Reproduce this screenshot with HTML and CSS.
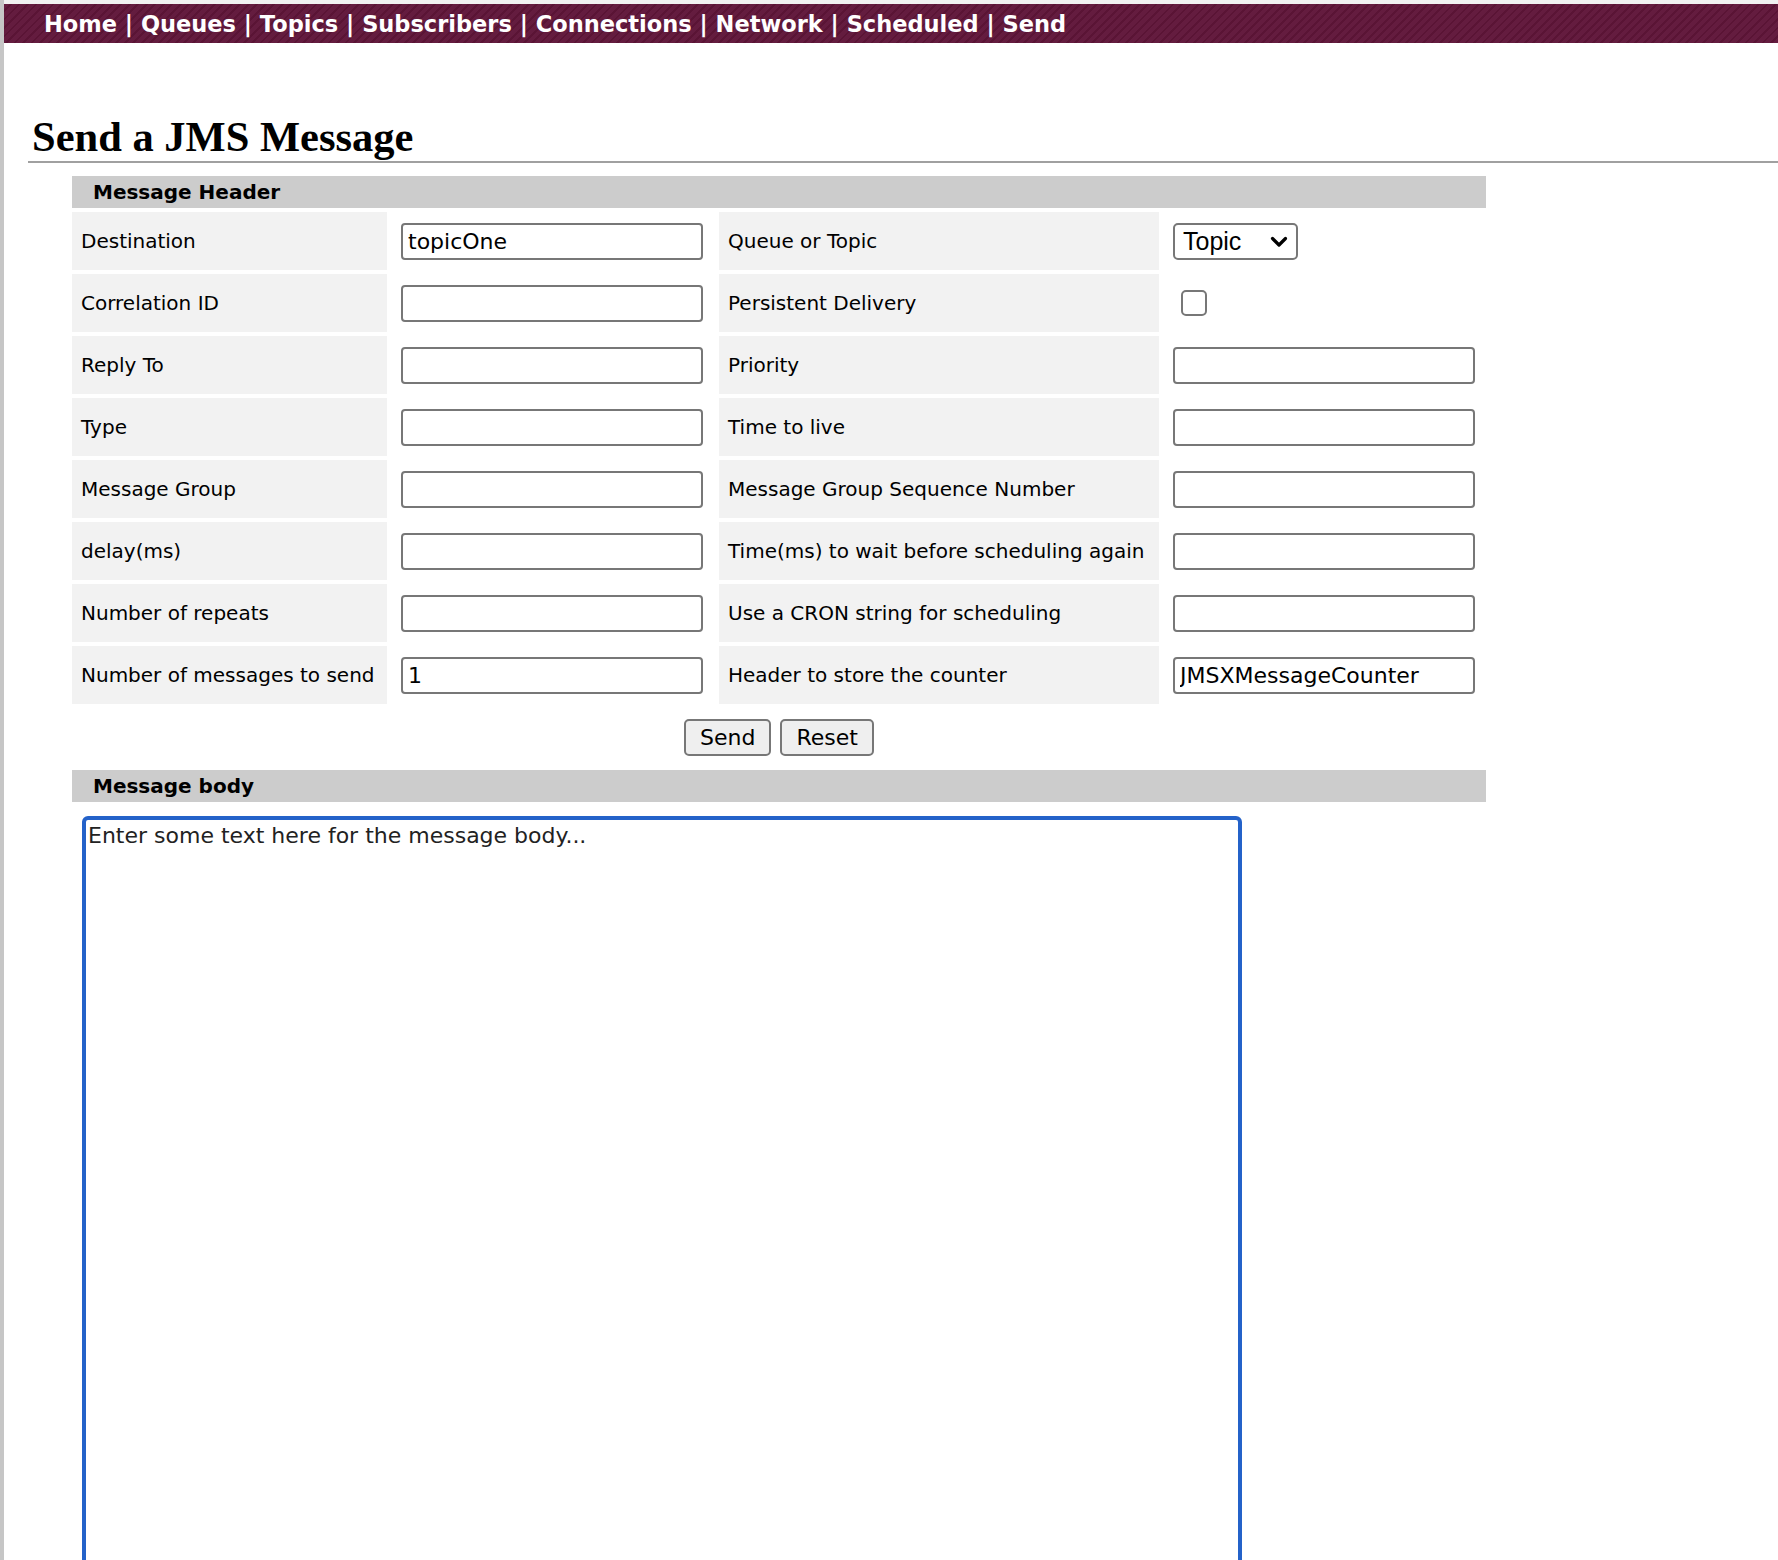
FILE: index.html
```html
<!DOCTYPE html>
<html>
<head>
<meta charset="utf-8">
<title>Send a JMS Message</title>
<link rel="stylesheet" href="styles.css">
</head>
<body>
<div class="frame">
  <div class="topstrip"></div>
  <nav class="nav">
    <a href="#">Home</a> | <a href="#">Queues</a> | <a href="#">Topics</a> | <a href="#">Subscribers</a> | <a href="#">Connections</a> | <a href="#">Network</a> | <a href="#">Scheduled</a> | <a href="#">Send</a>
  </nav>
  <main class="content">
    <h1 class="title">Send a JMS Message</h1>
    <form class="form">
      <div class="bar">Message Header</div>
      <div class="grid">
        <div class="label">Destination</div>
        <div class="field"><input class="text" type="text" value="topicOne"></div>
        <div class="label">Queue or Topic</div>
        <div class="field">
          <span class="selectwrap">
            <select class="select"><option>Queue</option><option selected>Topic</option></select>
            <svg class="chev" width="18" height="12" viewBox="0 0 18 12"><path d="M2.5 2.5 L9 9 L15.5 2.5" fill="none" stroke="#000" stroke-width="3.2" stroke-linecap="round" stroke-linejoin="round"/></svg>
          </span>
        </div>

        <div class="label">Correlation ID</div>
        <div class="field"><input class="text" type="text"></div>
        <div class="label">Persistent Delivery</div>
        <div class="field"><input class="check" type="checkbox"></div>

        <div class="label">Reply To</div>
        <div class="field"><input class="text" type="text"></div>
        <div class="label">Priority</div>
        <div class="field"><input class="text" type="text"></div>

        <div class="label">Type</div>
        <div class="field"><input class="text" type="text"></div>
        <div class="label">Time to live</div>
        <div class="field"><input class="text" type="text"></div>

        <div class="label">Message Group</div>
        <div class="field"><input class="text" type="text"></div>
        <div class="label">Message Group Sequence Number</div>
        <div class="field"><input class="text" type="text"></div>

        <div class="label">delay(ms)</div>
        <div class="field"><input class="text" type="text"></div>
        <div class="label">Time(ms) to wait before scheduling again</div>
        <div class="field"><input class="text" type="text"></div>

        <div class="label">Number of repeats</div>
        <div class="field"><input class="text" type="text"></div>
        <div class="label">Use a CRON string for scheduling</div>
        <div class="field"><input class="text" type="text"></div>

        <div class="label">Number of messages to send</div>
        <div class="field"><input class="text" type="text" value="1"></div>
        <div class="label">Header to store the counter</div>
        <div class="field"><input class="text" type="text" value="JMSXMessageCounter"></div>
      </div>
      <div class="buttons">
        <button class="btn" type="button">Send</button>
        <button class="btn" type="button">Reset</button>
      </div>
      <div class="bar">Message body</div>
      <div class="bodywrap">
        <textarea class="body">Enter some text here for the message body...</textarea>
      </div>
    </form>
  </main>
</div>
</body>
</html>
```

FILE: styles.css
```css
html, body {
  margin: 0;
  padding: 0;
  background: #ffffff;
}
body {
  overflow: hidden;
}
.frame {
  border-left: 4px solid #c6c6c6;
  min-height: 1560px;
  box-sizing: border-box;
  font-family: "DejaVu Sans", Verdana, sans-serif;
}
.topstrip {
  height: 4px;
  background: #f1f1f1;
}
.nav {
  height: 39px;
  line-height: 40px;
  padding-left: 40px;
  background-color: #621a3d;
  background-image: repeating-linear-gradient(135deg, #641c3f 0px, #641c3f 4px, #5a1435 4px, #5a1435 6px);
  color: #ffffff;
  font-weight: bold;
  font-size: 22.5px;
  white-space: nowrap;
}
.nav a {
  color: #ffffff;
  text-decoration: none;
}
.content {
  padding-top: 70px;
  padding-left: 24px;
}
.title {
  margin: 0;
  padding-left: 4px;
  font-family: "Liberation Serif", "Times New Roman", serif;
  font-weight: bold;
  font-size: 42.5px;
  line-height: 48px;
  color: #000;
  border-bottom: 2px solid #a0a0a0;
}
.form {
  margin: 13px 0 0 44px;
  width: 1414px;
}
.bar {
  height: 32px;
  line-height: 32px;
  background: #cccccc;
  padding-left: 21px;
  font-weight: bold;
  font-size: 20px;
  color: #000;
}
.grid {
  display: grid;
  grid-template-columns: 315px 324px 440px 323px;
  grid-auto-rows: 58px;
  gap: 4px;
  margin-top: 4px;
}
.label {
  background: #f2f2f2;
  display: flex;
  align-items: center;
  padding: 0 9px;
  font-size: 20px;
  color: #000;
  white-space: nowrap;
}
.field {
  display: flex;
  align-items: center;
  padding: 0 10px;
}
.text {
  box-sizing: border-box;
  width: 302px;
  height: 37px;
  border: 2px solid #777777;
  border-radius: 4px;
  padding: 0 0 0 5px;
  margin: 0;
  font-family: "DejaVu Sans", Verdana, sans-serif;
  font-size: 22px;
  color: #000;
  background: #fff;
  outline: none;
}
.selectwrap {
  position: relative;
  display: inline-block;
  width: 125px;
  height: 37px;
}
.select {
  -webkit-appearance: none;
  appearance: none;
  box-sizing: border-box;
  width: 125px;
  height: 37px;
  border: 2px solid #777777;
  border-radius: 5px;
  background: #fff;
  padding: 0 0 0 8px;
  margin: 0;
  font-family: "Liberation Sans", Arial, sans-serif;
  font-size: 25px;
  color: #000;
}
.chev {
  position: absolute;
  left: 97px;
  top: 13px;
  pointer-events: none;
}
.check {
  -webkit-appearance: none;
  appearance: none;
  box-sizing: border-box;
  width: 26px;
  height: 26px;
  margin: 0 0 0 8px;
  border: 2px solid #777777;
  border-radius: 5px;
  background: #fff;
}
.buttons {
  display: flex;
  justify-content: center;
  gap: 9px;
  margin: 15px 0 14px;
}
.btn {
  box-sizing: border-box;
  height: 37px;
  padding: 0 14px;
  border: 2px solid #777777;
  border-radius: 5px;
  background: #efefef;
  font-family: "DejaVu Sans", Verdana, sans-serif;
  font-size: 22px;
  color: #000;
}
.bodywrap {
  padding: 14px 0 0 10px;
}
.body {
  display: block;
  box-sizing: border-box;
  width: 1160px;
  height: 800px;
  margin: 0;
  border: 4px solid #2462c9;
  border-radius: 6px;
  padding: 3px 2px 2px;
  font-family: "DejaVu Sans", Verdana, sans-serif;
  font-size: 22px;
  line-height: 26px;
  color: #222;
  resize: none;
  outline: none;
}
```
